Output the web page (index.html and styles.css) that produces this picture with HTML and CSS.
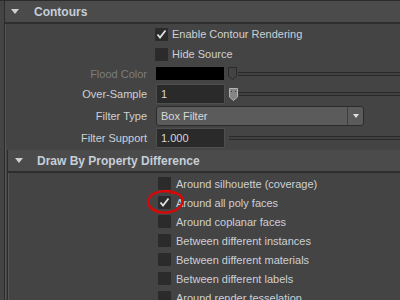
FILE: index.html
```html
<!DOCTYPE html>
<html>
<head>
    <title>Contours</title>
    <link rel="stylesheet" href="styles.css">
</head>
<body>
    <div class="editor">
        <div class="section-header"><span class="caret"></span>Contours</div>
        <div class="section-body">
            <div class="attr-row row-20">
                <span></span>
                <div class="check">
                    <span class="box"><svg width="13" height="13" viewBox="0 0 13 13"><path d="M2.5 6.5 L5 9.5 L10.5 2.5" fill="none" stroke="#e2e2e2" stroke-width="1.8"/></svg></span>
                    Enable Contour Rendering
                </div>
            </div>
            <div class="attr-row row-20">
                <span></span>
                <div class="check"><span class="box"></span>Hide Source</div>
            </div>
            <div class="attr-row row-19">
                <span class="label disabled">Flood Color</span>
                <div class="slider">
                    <span class="swatch"></span>
                    <svg class="handle" width="11" height="15" viewBox="0 0 11 15"><path d="M1.5 1.5 H9.5 V10 L5.5 13.5 L1.5 10 Z" fill="#444" stroke="#2a2a2a"/></svg>
                    <span class="track"></span>
                </div>
            </div>
            <div class="attr-row row-22">
                <span class="label">Over-Sample</span>
                <div class="slider">
                    <span class="field">1</span>
                    <svg class="handle" width="11" height="15" viewBox="0 0 11 15"><path d="M1.5 1.5 H9.5 V10 L5.5 13.5 L1.5 10 Z" fill="#858585" stroke="#b4b4b4"/><path d="M3.5 4 v1 M7.5 4 v1" stroke="#3a3a3a"/></svg>
                    <span class="track"></span>
                </div>
            </div>
            <div class="attr-row row-22">
                <span class="label">Filter Type</span>
                <div class="dropdown">
                    <span class="dropdown-text">Box Filter</span>
                    <span class="dropdown-arrow"><span class="arrow"></span></span>
                </div>
            </div>
            <div class="attr-row row-22">
                <span class="label">Filter Support</span>
                <div class="slider">
                    <span class="field">1.000</span>
                    <span class="track track-gap"></span>
                </div>
            </div>

            <div class="subsection">
                <div class="section-header sub-header"><span class="caret"></span>Draw By Property Difference</div>
                <div class="section-body sub-body">
                    <div class="check-row"><span class="box"></span>Around silhouette (coverage)</div>
                    <div class="check-row">
                        <span class="box"><svg width="13" height="13" viewBox="0 0 13 13"><path d="M2.5 6.5 L5 9.5 L10.5 2.5" fill="none" stroke="#e2e2e2" stroke-width="1.8"/></svg></span>
                        Around all poly faces
                        <svg class="mark" width="42" height="28" viewBox="0 0 42 28"><path d="M31 4 C22 0 6 2 3.5 11 C1.5 19 12 24.5 22 23.5 C32 22.5 38 17 37.5 11 C37 6 32 3 25 3.5" fill="none" stroke="#d80808" stroke-width="2.4" stroke-linecap="round"/></svg>
                    </div>
                    <div class="check-row"><span class="box"></span>Around coplanar faces</div>
                    <div class="check-row"><span class="box"></span>Between different instances</div>
                    <div class="check-row"><span class="box"></span>Between different materials</div>
                    <div class="check-row"><span class="box"></span>Between different labels</div>
                    <div class="check-row"><span class="box"></span>Around render tesselation</div>
                </div>
            </div>
        </div>
    </div>
</body>
</html>
```

FILE: styles.css
```css
body {
    margin: 0;
    height: 299px;
    overflow: hidden;
    background-color: #444444;
    border-top: 1px solid #2b2b2b;
    font-family: "Liberation Sans", Arial, sans-serif;
    font-size: 11px;
    color: #cdd0d4;
}
.editor {
    margin-left: 4px;
    border-left: 1px solid #2c2c2c;
}
.section-header {
    height: 21px;
    display: flex;
    align-items: center;
    background-color: #4b4b4b;
    border-bottom: 2px solid #2e2e2e;
    font-size: 12px;
    font-weight: bold;
    color: #c6ced8;
}
.caret {
    width: 0;
    height: 0;
    margin: 0 15px 0 6px;
    border-left: 4.5px solid transparent;
    border-right: 4.5px solid transparent;
    border-top: 5px solid #cfcfcf;
}
.section-body {
    border-left: 1px solid #555555;
}
.attr-row {
    display: grid;
    grid-template-columns: 141px 1fr;
    column-gap: 9px;
    align-items: center;
}
.row-19 { height: 19px; }
.row-20 { height: 20px; }
.row-22 { height: 22px; }
.label {
    text-align: right;
}
.label.disabled {
    color: #7d7d7d;
}
.check {
    display: flex;
    align-items: center;
    gap: 4px;
    margin-left: -1px;
}
.box {
    width: 13px;
    height: 13px;
    flex-shrink: 0;
    background-color: #2b2b2b;
    border-radius: 1px;
    display: flex;
}
.slider {
    display: flex;
    align-items: center;
}
.swatch {
    width: 68px;
    height: 13px;
    background-color: #000000;
}
.field {
    width: 63px;
    height: 18px;
    line-height: 18px;
    padding-left: 4px;
    background-color: #2a2a2a;
    border: 1px solid #4f4f4f;
    border-radius: 1px;
    color: #d8d8d8;
}
.handle {
    margin-left: 3px;
    flex-shrink: 0;
}
.track {
    flex: 1;
    height: 2px;
    background-color: #404040;
    border-top: 1px solid #2a2a2a;
    border-bottom: 1px solid #2a2a2a;
}
.track-gap {
    margin-left: 4px;
}
.dropdown {
    width: 206px;
    height: 18px;
    display: flex;
    background-color: #5b5b5b;
    border: 1px solid #2b2b2b;
    border-radius: 3px;
    color: #d8d8d8;
}
.dropdown-text {
    flex: 1;
    line-height: 18px;
    padding-left: 4px;
}
.dropdown-arrow {
    width: 15px;
    display: flex;
    align-items: center;
    justify-content: center;
    border-left: 1px solid #3e3e3e;
}
.arrow {
    width: 0;
    height: 0;
    border-left: 3.5px solid transparent;
    border-right: 3.5px solid transparent;
    border-top: 4px solid #e0e0e0;
}
.subsection {
    margin: 1px 0 0 1px;
    border-left: 1px solid #2c2c2c;
}
.sub-header .caret {
    margin: 0 14px 0 7px;
}
.sub-body {
    padding-top: 1px;
}
.check-row {
    position: relative;
    height: 19px;
    display: flex;
    align-items: center;
    gap: 5px;
    padding-left: 149px;
}
.mark {
    position: absolute;
    left: 136px;
    top: -4px;
}
```
